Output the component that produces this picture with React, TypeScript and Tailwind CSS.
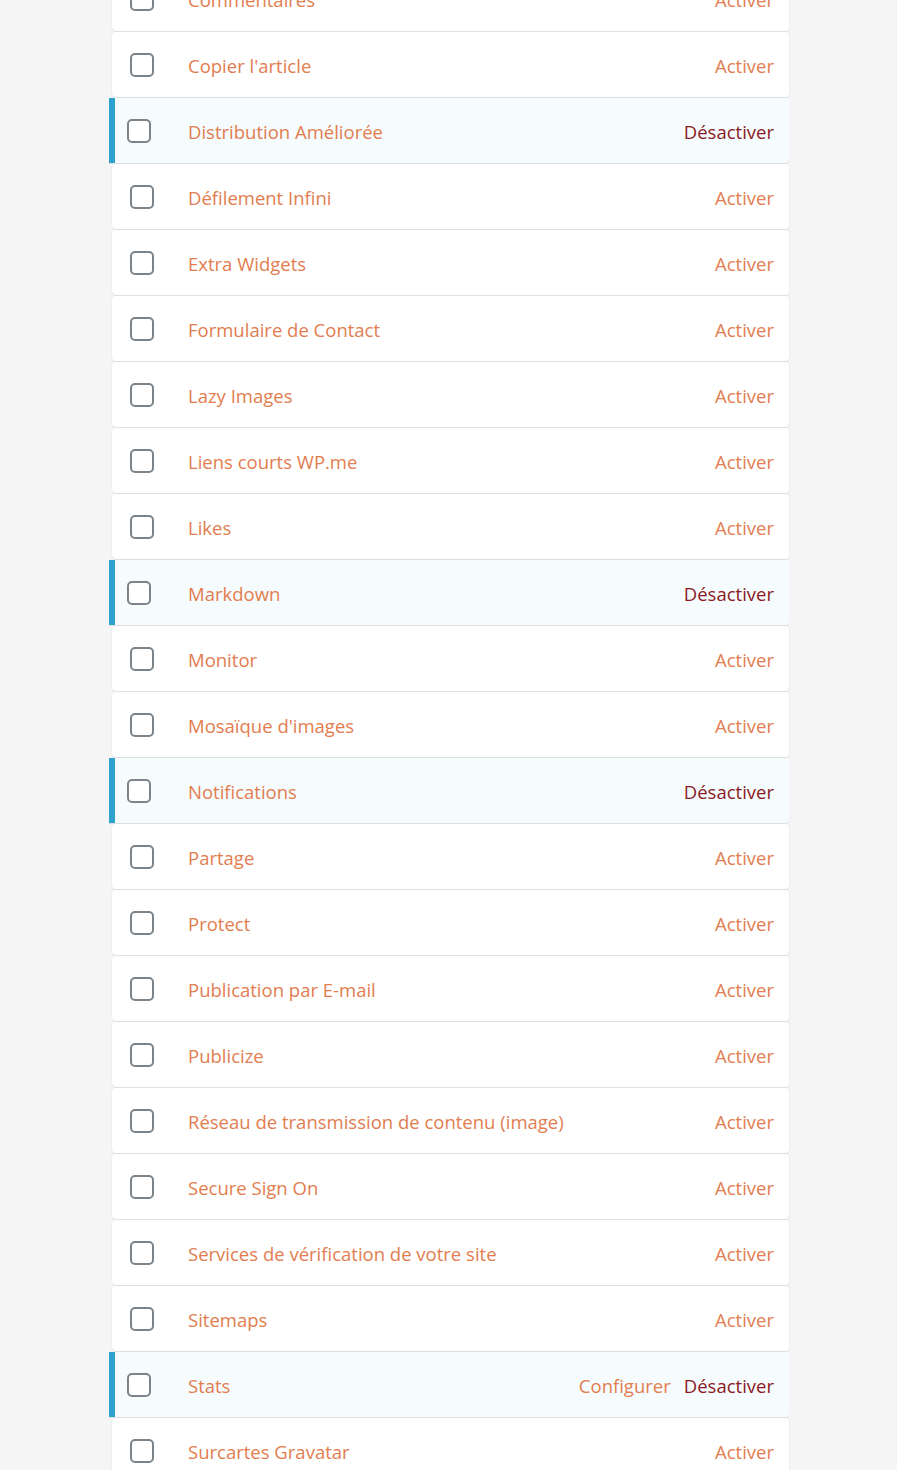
const modules: { name: string; active?: boolean; configure?: boolean }[] = [
  { name: "Commentaires" },
  { name: "Copier l'article" },
  { name: "Distribution Améliorée", active: true },
  { name: "Défilement Infini" },
  { name: "Extra Widgets" },
  { name: "Formulaire de Contact" },
  { name: "Lazy Images" },
  { name: "Liens courts WP.me" },
  { name: "Likes" },
  { name: "Markdown", active: true },
  { name: "Monitor" },
  { name: "Mosaïque d'images" },
  { name: "Notifications", active: true },
  { name: "Partage" },
  { name: "Protect" },
  { name: "Publication par E-mail" },
  { name: "Publicize" },
  { name: "Réseau de transmission de contenu (image)" },
  { name: "Secure Sign On" },
  { name: "Services de vérification de votre site" },
  { name: "Sitemaps" },
  { name: "Stats", active: true, configure: true },
  { name: "Surcartes Gravatar" },
];

function Checkbox() {
  return <span className="block h-6 w-6 shrink-0 rounded-[5px] border-2 border-[#7c848b] bg-white" />;
}

function ModuleRow({ name, active, configure }: { name: string; active?: boolean; configure?: boolean }) {
  if (active) {
    return (
      <div className="mb-[1px] ml-[-3px] flex h-[65px] items-center rounded-r-[4px] border-l-[6px] border-[#2ea2cc] bg-[#f6fbfd] pr-[15px] pl-[12px] shadow-[0_1px_0_#dcdfe2]">
        <div className="w-[61px] shrink-0">
          <Checkbox />
        </div>
        <span className="flex-1 pt-[2px] text-[#e27d50]">{name}</span>
        {configure && <span className="mr-[13px] pt-[2px] text-[#e27d50]">Configurer</span>}
        <span className="pt-[2px] text-[#8a1a1f]">Désactiver</span>
      </div>
    );
  }
  return (
    <div className="mb-[1px] flex h-[65px] items-center rounded-[4px] bg-white pr-[15px] pl-[18px] shadow-[0_1px_0_#dcdfe2,0_0_0_1px_rgba(220,225,230,0.35)]">
      <div className="w-[58px] shrink-0">
        <Checkbox />
      </div>
      <span className="flex-1 pt-[2px] text-[#e27d50]">{name}</span>
      <span className="pt-[2px] text-[#e27d50]">Activer</span>
    </div>
  );
}

export default function App() {
  return (
    <div className="min-h-[1470px] overflow-hidden bg-[#f5f5f5] font-['Open_Sans',sans-serif] text-[18.5px]">
      <div className="mx-auto mt-[-34px] w-[677px] translate-x-[2px]">
        {modules.map((m) => (
          <ModuleRow key={m.name} {...m} />
        ))}
      </div>
    </div>
  );
}
